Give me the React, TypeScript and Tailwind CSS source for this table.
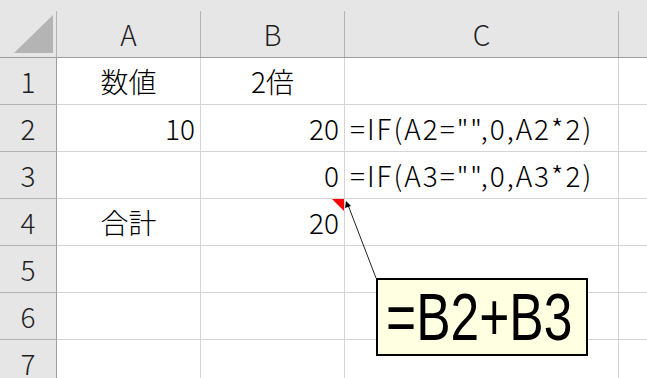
import React from "react";

type Cell = { t: string; align: "left" | "center" | "right" };

const E: Cell = { t: "", align: "left" };

const rows: { n: number; cells: Cell[] }[] = [
  { n: 1, cells: [{ t: "数値", align: "center" }, { t: "2倍", align: "center" }, E] },
  { n: 2, cells: [{ t: "10", align: "right" }, { t: "20", align: "right" }, { t: '=IF(A2="",0,A2*2)', align: "left" }] },
  { n: 3, cells: [E, { t: "0", align: "right" }, { t: '=IF(A3="",0,A3*2)', align: "left" }] },
  { n: 4, cells: [{ t: "合計", align: "center" }, { t: "20", align: "right" }, E] },
  { n: 5, cells: [E, E, E] },
  { n: 6, cells: [E, E, E] },
  { n: 7, cells: [E, E, E] },
];

const widths = ["w-[144px]", "w-[144px]", "w-[274px]"];

const alignCls = (a: Cell["align"]) =>
  a === "center"
    ? "justify-center"
    : a === "right"
      ? "justify-end pr-[5px]"
      : "justify-start pl-[5px] tracking-[2px]";

export default function App() {
  return (
    <div
      className="relative h-[378px] w-[647px] overflow-hidden bg-white text-[28px] font-light text-black"
      style={{ fontFamily: '"Noto Sans CJK JP", "Noto Sans", sans-serif' }}
    >
      {/* header */}
      <div className="flex h-[58px] border-b border-[#9e9e9e] bg-[#e6e6e6] pt-[11px] text-[#1f1f1f]">
        <div className="relative h-[46px] w-[57px] shrink-0 border-r border-[#b3b3b3]">
          <svg className="absolute left-0 top-0" width="56" height="46" viewBox="0 0 56 46">
            <polygon points="14,42 53,42 53,4" fill="#b4b4b4" />
          </svg>
        </div>
        {["A", "B", "C"].map((c, i) => (
          <div
            key={c}
            className={`flex h-[46px] ${widths[i]} shrink-0 items-center justify-center border-r border-[#b3b3b3] leading-none`}
          >
            {c}
          </div>
        ))}
        <div className="h-[46px] flex-1" />
      </div>

      {rows.map((r) => (
        <div key={r.n} className="flex h-[47px]">
          <div className="flex w-[57px] shrink-0 items-center justify-center border-r border-b border-r-[#9e9e9e] border-b-[#b3b3b3] bg-[#e6e6e6] leading-none text-[#1f1f1f]">
            {r.n}
          </div>
          {r.cells.map((c, i) => (
            <div
              key={i}
              className={`flex ${widths[i]} shrink-0 items-center whitespace-nowrap border-r border-b border-[#d4d4d4] leading-none ${alignCls(c.align)}`}
            >
              {c.t}
            </div>
          ))}
          <div className="flex-1 border-b border-[#d4d4d4]" />
        </div>
      ))}

      {/* comment indicator */}
      <svg className="pointer-events-none absolute left-0 top-0" width="647" height="378" viewBox="0 0 647 378">
        <polygon points="332,199 344,199 344,211" fill="#ff0000" />
        <line x1="376" y1="278" x2="348" y2="205" stroke="#222" strokeWidth="1" />
        <polygon points="346,201 351,206 345,208" fill="#000" />
      </svg>

      {/* comment box */}
      <div className="absolute left-[376px] top-[278px] h-[78px] w-[212px] overflow-hidden border-2 border-black bg-[#ffffe1]">
        <div
          className="absolute left-[8px] top-[-2px] origin-left scale-x-[0.77] whitespace-nowrap text-[67px] font-normal leading-[78px] text-black"
          style={{ fontFamily: '"Liberation Sans", Arial, sans-serif' }}
        >
          =B2+B3
        </div>
      </div>
    </div>
  );
}
